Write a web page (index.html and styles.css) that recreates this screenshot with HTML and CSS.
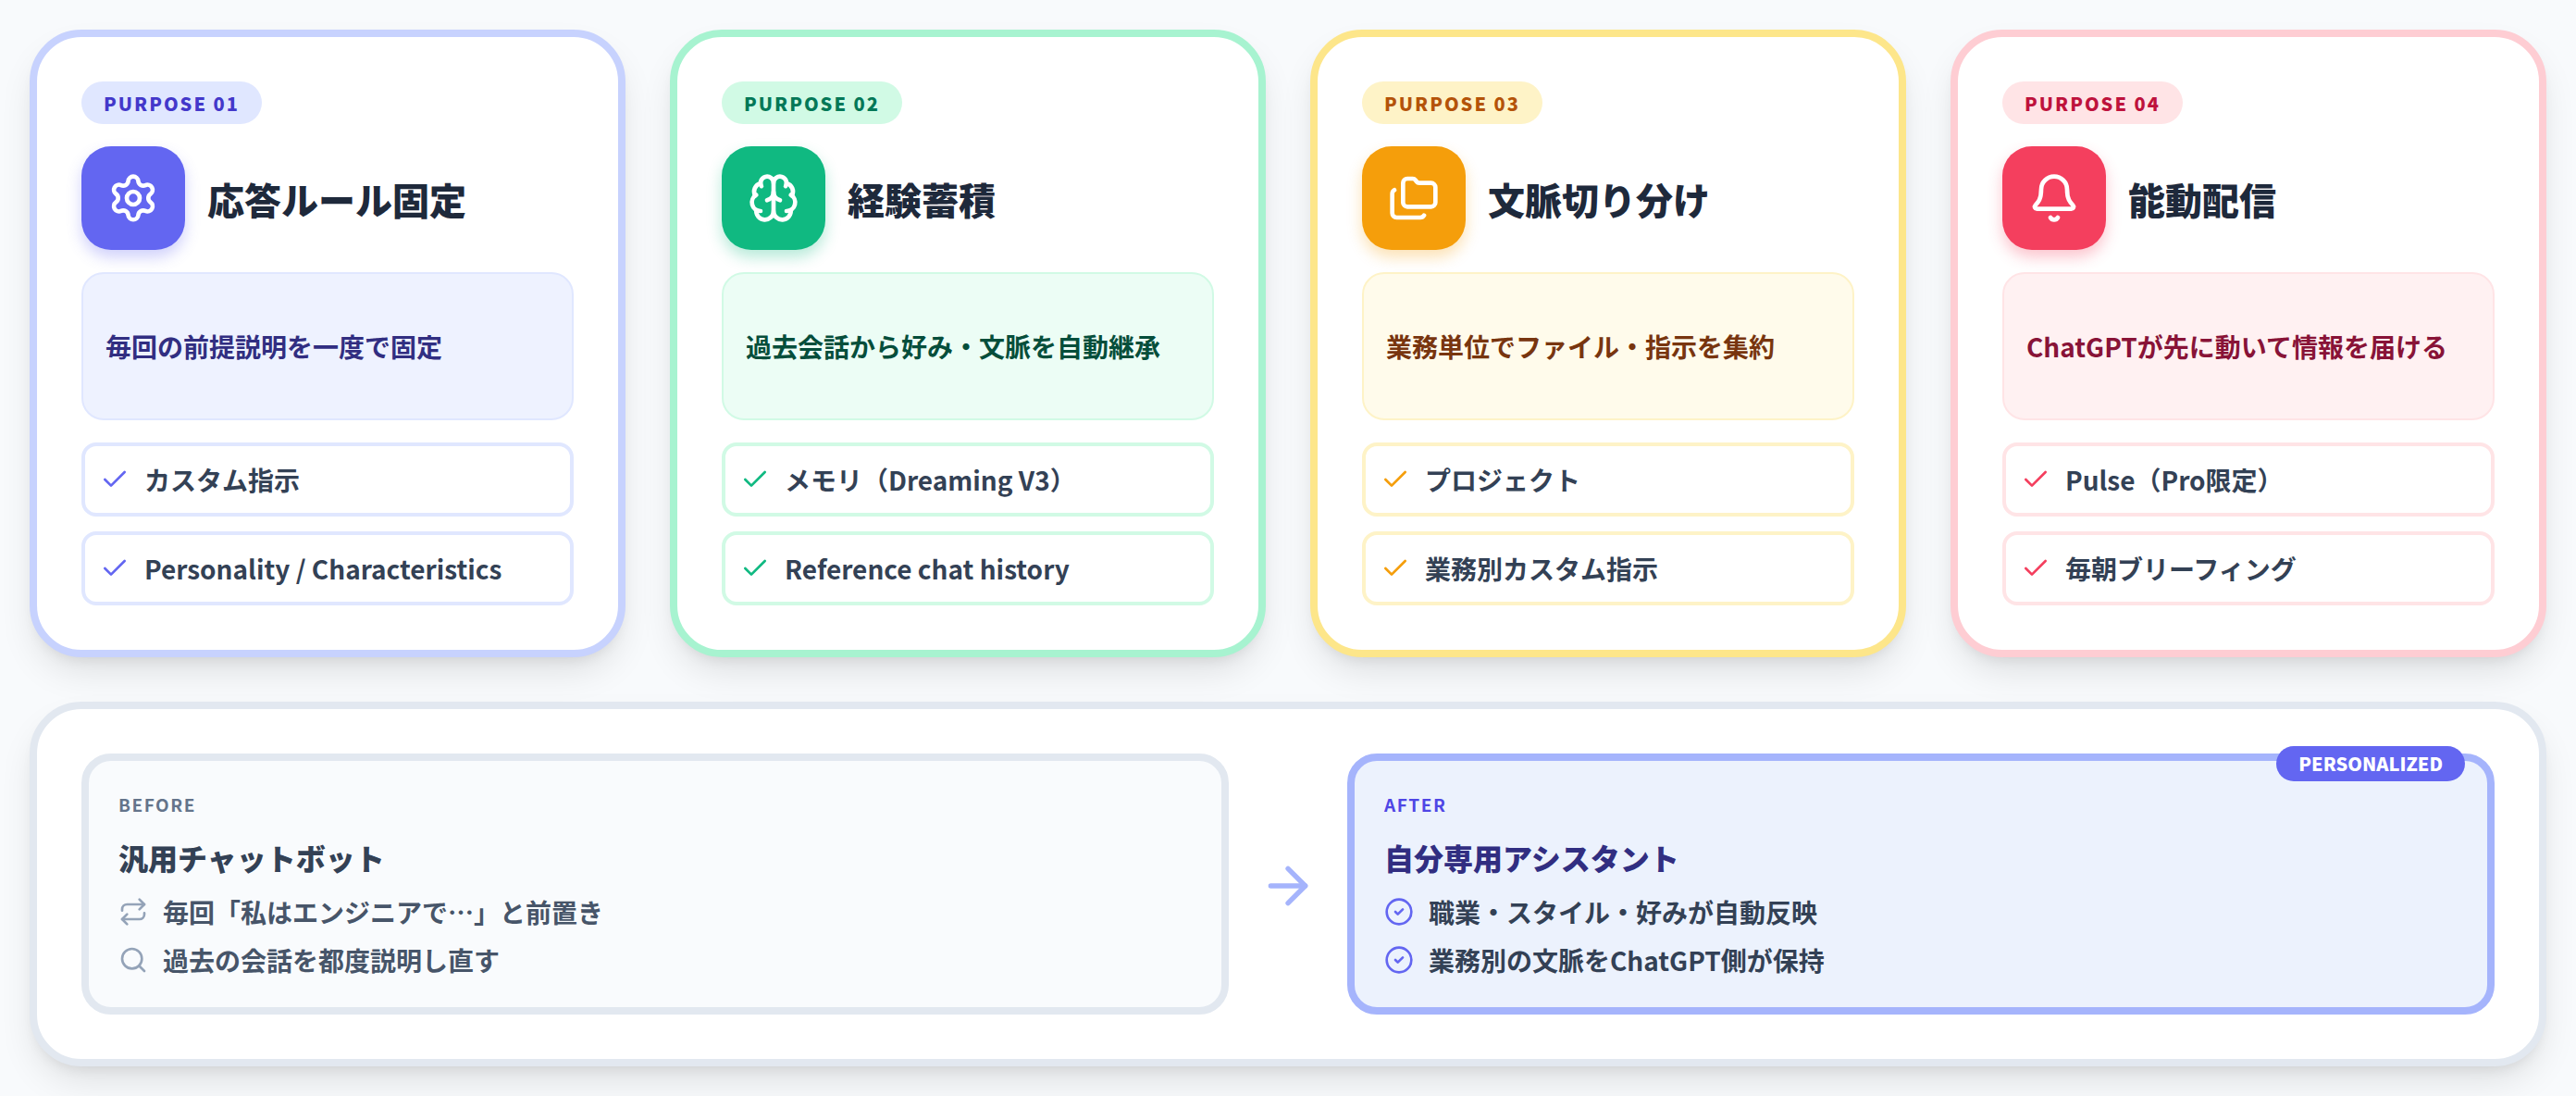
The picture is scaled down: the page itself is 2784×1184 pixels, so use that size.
FILE: index.html
```html
<!DOCTYPE html>
<html lang="ja">
<head>
  <meta charset="UTF-8">
  <title>ChatGPT パーソナライズ</title>
  <link rel="stylesheet" href="styles.css">
</head>
<body>

  <div class="cards">

    <!-- Purpose 01 -->
    <section class="card indigo">
      <span class="pill">PURPOSE 01</span>
      <div class="card-head">
        <div class="tile">
          <svg class="icon-lg" viewBox="0 0 24 24"><path d="M9.671 4.136a2.34 2.34 0 0 1 4.659 0 2.34 2.34 0 0 0 3.319 1.915 2.34 2.34 0 0 1 2.33 4.033 2.34 2.34 0 0 0 0 3.831 2.34 2.34 0 0 1-2.33 4.033 2.34 2.34 0 0 0-3.319 1.915 2.34 2.34 0 0 1-4.659 0 2.34 2.34 0 0 0-3.32-1.915 2.34 2.34 0 0 1-2.33-4.033 2.34 2.34 0 0 0 0-3.831A2.34 2.34 0 0 1 6.35 6.051a2.34 2.34 0 0 0 3.319-1.915"/><circle cx="12" cy="12" r="3"/></svg>
        </div>
        <h2>応答ルール固定</h2>
      </div>
      <p class="desc">毎回の前提説明を一度で固定</p>
      <ul class="features">
        <li><svg class="check" viewBox="0 0 24 24"><path d="M20 6 9 17l-5-5"/></svg>カスタム指示</li>
        <li><svg class="check" viewBox="0 0 24 24"><path d="M20 6 9 17l-5-5"/></svg>Personality / Characteristics</li>
      </ul>
    </section>

    <!-- Purpose 02 -->
    <section class="card emerald">
      <span class="pill">PURPOSE 02</span>
      <div class="card-head">
        <div class="tile">
          <svg class="icon-lg" viewBox="0 0 24 24"><path d="M12 18V5"/><path d="M15 13a4.17 4.17 0 0 1-3-4 4.17 4.17 0 0 1-3 4"/><path d="M17.598 6.5A3 3 0 1 0 12 5a3 3 0 1 0-5.598 1.5"/><path d="M17.997 5.125a4 4 0 0 1 2.526 5.77"/><path d="M18 18a4 4 0 0 0 2-7.464"/><path d="M19.967 17.483A4 4 0 1 1 12 18a4 4 0 1 1-7.967-.517"/><path d="M6 18a4 4 0 0 1-2-7.464"/><path d="M6.003 5.125a4 4 0 0 0-2.526 5.77"/></svg>
        </div>
        <h2>経験蓄積</h2>
      </div>
      <p class="desc">過去会話から好み・文脈を自動継承</p>
      <ul class="features">
        <li><svg class="check" viewBox="0 0 24 24"><path d="M20 6 9 17l-5-5"/></svg>メモリ（Dreaming V3）</li>
        <li><svg class="check" viewBox="0 0 24 24"><path d="M20 6 9 17l-5-5"/></svg>Reference chat history</li>
      </ul>
    </section>

    <!-- Purpose 03 -->
    <section class="card amber">
      <span class="pill">PURPOSE 03</span>
      <div class="card-head">
        <div class="tile">
          <svg class="icon-lg" viewBox="0 0 24 24"><path d="M20 5a2 2 0 0 1 2 2v7a2 2 0 0 1-2 2H9a2 2 0 0 1-2-2V5a2 2 0 0 1 2-2h2.5a1.5 1.5 0 0 1 1.2.6l.6.8a1.5 1.5 0 0 0 1.2.6z"/><path d="M3 8.268a2 2 0 0 0-1 1.738V19a2 2 0 0 0 2 2h11a2 2 0 0 0 1.732-1"/></svg>
        </div>
        <h2>文脈切り分け</h2>
      </div>
      <p class="desc">業務単位でファイル・指示を集約</p>
      <ul class="features">
        <li><svg class="check" viewBox="0 0 24 24"><path d="M20 6 9 17l-5-5"/></svg>プロジェクト</li>
        <li><svg class="check" viewBox="0 0 24 24"><path d="M20 6 9 17l-5-5"/></svg>業務別カスタム指示</li>
      </ul>
    </section>

    <!-- Purpose 04 -->
    <section class="card rose">
      <span class="pill">PURPOSE 04</span>
      <div class="card-head">
        <div class="tile">
          <svg class="icon-lg" viewBox="0 0 24 24"><path d="M10.268 21a2 2 0 0 0 3.464 0"/><path d="M3.262 15.326A1 1 0 0 0 4 17h16a1 1 0 0 0 .74-1.673C19.41 13.956 18 12.499 18 8A6 6 0 0 0 6 8c0 4.499-1.411 5.956-2.738 7.326"/></svg>
        </div>
        <h2>能動配信</h2>
      </div>
      <p class="desc">ChatGPTが先に動いて情報を届ける</p>
      <ul class="features">
        <li><svg class="check" viewBox="0 0 24 24"><path d="M20 6 9 17l-5-5"/></svg>Pulse（Pro限定）</li>
        <li><svg class="check" viewBox="0 0 24 24"><path d="M20 6 9 17l-5-5"/></svg>毎朝ブリーフィング</li>
      </ul>
    </section>

  </div>

  <!-- Before / After -->
  <section class="compare">
    <div class="side before">
      <div class="side-label">BEFORE</div>
      <h3>汎用チャットボット</h3>
      <ul class="side-list">
        <li><svg class="icon-sm" viewBox="0 0 24 24"><path d="m17 2 4 4-4 4"/><path d="M3 11v-1a4 4 0 0 1 4-4h14"/><path d="m7 22-4-4 4-4"/><path d="M21 13v1a4 4 0 0 1-4 4H3"/></svg>毎回「私はエンジニアで…」と前置き</li>
        <li><svg class="icon-sm" viewBox="0 0 24 24"><path d="m21 21-4.34-4.34"/><circle cx="11" cy="11" r="8"/></svg>過去の会話を都度説明し直す</li>
      </ul>
    </div>

    <div class="arrow">
      <svg viewBox="0 0 24 24"><path d="M5 12h14"/><path d="m12 5 7 7-7 7"/></svg>
    </div>

    <div class="side after">
      <span class="badge">PERSONALIZED</span>
      <div class="side-label">AFTER</div>
      <h3>自分専用アシスタント</h3>
      <ul class="side-list">
        <li><svg class="icon-sm" viewBox="0 0 24 24"><circle cx="12" cy="12" r="10"/><path d="m9 12 2 2 4-4"/></svg>職業・スタイル・好みが自動反映</li>
        <li><svg class="icon-sm" viewBox="0 0 24 24"><circle cx="12" cy="12" r="10"/><path d="m9 12 2 2 4-4"/></svg>業務別の文脈をChatGPT側が保持</li>
      </ul>
    </div>
  </section>

</body>
</html>
```

FILE: styles.css
```css
* {
  box-sizing: border-box;
}

html, body {
  margin: 0;
  height: 1184px;
  overflow: hidden;
}

body {
  padding: 32px;
  display: flex;
  flex-direction: column;
  gap: 48px;
  background: #f8fafc;
  font-family: "Noto Sans CJK JP", "Noto Sans", sans-serif;
  color: #1e293b;
}

svg {
  fill: none;
  stroke: currentColor;
  stroke-width: 2;
  stroke-linecap: round;
  stroke-linejoin: round;
  flex-shrink: 0;
}

ul {
  list-style: none;
  margin: 0;
  padding: 0;
}

/* cards */
.cards {
  display: grid;
  grid-template-columns: repeat(4, 1fr);
  gap: 48px;
}

.card {
  display: flex;
  flex-direction: column;
  align-items: stretch;
  padding: 48px;
  background: #fff;
  border: 8px solid var(--border);
  border-radius: 56px;
  box-shadow: 0 20px 40px -8px rgba(0, 0, 0, 0.12), 0 8px 16px -8px rgba(0, 0, 0, 0.1);
}

.indigo {
  --border: #c7d2fe;
  --soft: #e0e7ff;
  --pale: #eef2ff;
  --main: #6366f1;
  --pill-text: #4338ca;
  --desc-text: #312e81;
  --tile-shadow: rgba(99, 102, 241, 0.3);
}

.emerald {
  --border: #a7f3d0;
  --soft: #d1fae5;
  --pale: #ecfdf5;
  --main: #10b981;
  --pill-text: #047857;
  --desc-text: #064e3b;
  --tile-shadow: rgba(16, 185, 129, 0.3);
}

.amber {
  --border: #fde68a;
  --soft: #fef3c7;
  --pale: #fffbeb;
  --main: #f59e0b;
  --pill-text: #b45309;
  --desc-text: #78350f;
  --tile-shadow: rgba(245, 158, 11, 0.3);
}

.rose {
  --border: #fecdd3;
  --soft: #ffe4e6;
  --pale: #fff1f2;
  --main: #f43f5e;
  --pill-text: #be123c;
  --desc-text: #881337;
  --tile-shadow: rgba(244, 63, 94, 0.3);
}

.pill {
  align-self: flex-start;
  height: 46px;
  padding: 0 24px;
  border-radius: 23px;
  background: var(--soft);
  color: var(--pill-text);
  font-size: 20px;
  font-weight: 800;
  line-height: 48px;
  letter-spacing: 0.1em;
}

.card-head {
  display: flex;
  align-items: center;
  gap: 24px;
  margin-top: 24px;
}

.tile {
  display: flex;
  align-items: center;
  justify-content: center;
  width: 112px;
  height: 112px;
  border-radius: 32px;
  background: var(--main);
  color: #fff;
  box-shadow: 0 8px 16px var(--tile-shadow);
}

.icon-lg {
  width: 56px;
  height: 56px;
}

.card-head h2 {
  margin: 2px 0 0;
  font-size: 40px;
  font-weight: 900;
  line-height: 1.3;
  color: #1e293b;
}

.desc {
  display: flex;
  align-items: center;
  height: 160px;
  margin: 24px 0 0;
  padding: 0 24px;
  background: var(--pale);
  border: 2px solid var(--soft);
  border-radius: 24px;
  color: var(--desc-text);
  font-size: 28px;
  font-weight: 700;
}

.features {
  display: flex;
  flex-direction: column;
  gap: 16px;
  margin-top: 24px;
}

.features li {
  display: flex;
  align-items: center;
  gap: 16px;
  height: 80px;
  padding: 0 16px;
  border: 4px solid var(--soft);
  border-radius: 16px;
  color: #334155;
  font-size: 28px;
  font-weight: 700;
}

.check {
  width: 32px;
  height: 32px;
  color: var(--main);
}

/* before / after */
.compare {
  display: flex;
  height: 394px;
  padding: 48px;
  background: #fff;
  border: 8px solid #e2e8f0;
  border-radius: 56px;
  box-shadow: 0 20px 40px -8px rgba(0, 0, 0, 0.12), 0 8px 16px -8px rgba(0, 0, 0, 0.1);
}

.side {
  position: relative;
  flex: 1;
  padding: 32px;
  border: 8px solid #e2e8f0;
  border-radius: 32px;
  background: #f9fbfd;
}

.after {
  border-color: #a5b4fc;
  background: #ecf2fd;
}

.arrow {
  display: flex;
  align-items: center;
  justify-content: center;
  width: 128px;
  padding-top: 3px;
  color: #a5b4fc;
}

.arrow svg {
  width: 64px;
  height: 64px;
}

.side-label {
  font-size: 19px;
  font-weight: 700;
  line-height: 30px;
  letter-spacing: 0.08em;
  color: #64748b;
}

.after .side-label {
  color: #4f46e5;
}

.side h3 {
  margin: 20px 0 0;
  font-size: 32px;
  font-weight: 900;
  line-height: 44px;
  color: #334155;
}

.after h3 {
  color: #312e81;
}

.side-list {
  display: flex;
  flex-direction: column;
  gap: 12px;
  margin-top: 17px;
}

.side-list li {
  display: flex;
  align-items: center;
  gap: 16px;
  font-size: 28px;
  font-weight: 700;
  line-height: 40px;
  color: #475569;
}

.after .side-list li {
  color: #334155;
}

.icon-sm {
  width: 32px;
  height: 32px;
  color: #94a3b8;
}

.after .icon-sm {
  color: #6366f1;
}

.badge {
  position: absolute;
  top: -16px;
  right: 24px;
  padding: 0 24px;
  border-radius: 19px;
  background: #6366f1;
  color: #fff;
  font-size: 20px;
  font-weight: 900;
  line-height: 38px;
}
```
